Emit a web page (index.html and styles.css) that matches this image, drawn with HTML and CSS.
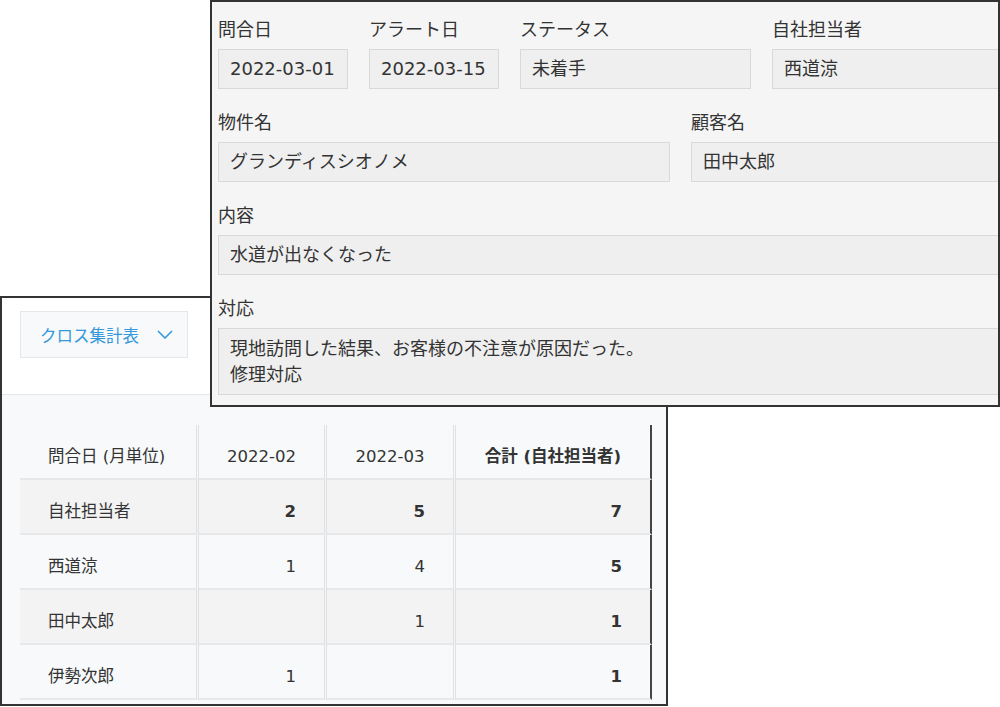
FILE: index.html
```html
<!DOCTYPE html>
<html lang="ja">

<head>
    <meta charset="UTF-8">
    <meta name="viewport" content="width=device-width, initial-scale=1.0">
    <title>クロス集計表</title>
    <link rel="stylesheet" href="styles.css">
</head>

<body>
    <div class="canvas">
        <div class="report-window">
            <div class="report-head">
                <button class="view-select">
                    <span>クロス集計表</span>
                    <svg width="16" height="9" viewBox="0 0 16 9">
                        <polyline points="1,1 8,8 15,1" fill="none" stroke="#3498db" stroke-width="1.6" />
                    </svg>
                </button>
            </div>
            <div class="report-body">
                <table class="cross-table">
                    <thead>
                        <tr>
                            <th class="col-name">問合日 (月単位)</th>
                            <th class="col-month">2022-02</th>
                            <th class="col-month2">2022-03</th>
                            <th class="col-total">合計 (自社担当者)</th>
                        </tr>
                    </thead>
                    <tbody>
                        <tr class="row-shade row-bold">
                            <td>自社担当者</td>
                            <td class="num">2</td>
                            <td class="num">5</td>
                            <td class="num total">7</td>
                        </tr>
                        <tr>
                            <td>西道涼</td>
                            <td class="num">1</td>
                            <td class="num">4</td>
                            <td class="num total">5</td>
                        </tr>
                        <tr class="row-shade">
                            <td>田中太郎</td>
                            <td class="num"></td>
                            <td class="num">1</td>
                            <td class="num total">1</td>
                        </tr>
                        <tr>
                            <td>伊勢次郎</td>
                            <td class="num">1</td>
                            <td class="num"></td>
                            <td class="num total">1</td>
                        </tr>
                    </tbody>
                </table>
            </div>
        </div>

        <div class="record-window">
            <div class="fields">
                <div class="field-row">
                    <div class="field w-date">
                        <div class="label">問合日</div>
                        <div class="value">2022-03-01</div>
                    </div>
                    <div class="field w-date">
                        <div class="label">アラート日</div>
                        <div class="value">2022-03-15</div>
                    </div>
                    <div class="field w-mid">
                        <div class="label">ステータス</div>
                        <div class="value">未着手</div>
                    </div>
                    <div class="field w-mid">
                        <div class="label">自社担当者</div>
                        <div class="value">西道涼</div>
                    </div>
                </div>
                <div class="field-row">
                    <div class="field w-wide">
                        <div class="label">物件名</div>
                        <div class="value">グランディスシオノメ</div>
                    </div>
                    <div class="field w-rest">
                        <div class="label">顧客名</div>
                        <div class="value">田中太郎</div>
                    </div>
                </div>
                <div class="field-row">
                    <div class="field w-full">
                        <div class="label">内容</div>
                        <div class="value">水道が出なくなった</div>
                    </div>
                </div>
                <div class="field-row">
                    <div class="field w-full">
                        <div class="label">対応</div>
                        <div class="value multi">現地訪問した結果、お客様の不注意が原因だった。<br>修理対応</div>
                    </div>
                </div>
            </div>
        </div>
    </div>
</body>

</html>
```

FILE: styles.css
```css
body {
    margin: 0;
    padding: 0;
    background-color: #fff;
    font-family: "DejaVu Sans", "Noto Sans CJK JP", sans-serif;
    color: #333;
}

.canvas {
    position: relative;
    width: 1000px;
    height: 707px;
    overflow: hidden;
}

/* bottom-left window: cross table */
.report-window {
    position: absolute;
    left: 0;
    top: 296px;
    width: 668px;
    height: 410px;
    box-sizing: border-box;
    border: 2px solid #333;
    background-color: #f7f9fa;
    overflow: hidden;
}

.report-head {
    background-color: #fff;
    height: 97px;
    box-sizing: border-box;
    padding: 13px 0 0 18px;
    border-bottom: 1px solid #e3e7e8;
}

.view-select {
    display: inline-flex;
    align-items: center;
    gap: 18px;
    height: 47px;
    box-sizing: border-box;
    padding: 0 14px 0 19px;
    background-color: #f7f9fa;
    border: 1px solid #e3e7e8;
    color: #3498db;
    font-family: "DejaVu Sans", "Noto Sans CJK JP", sans-serif;
    font-size: 16.5px;
    cursor: pointer;
}

.view-select svg {
    display: block;
}

.report-body {
    padding: 30px 0 0 18px;
}

.cross-table {
    border-collapse: separate;
    border-spacing: 0;
    table-layout: fixed;
    font-size: 16.5px;
    color: #333;
}

.cross-table th,
.cross-table td {
    box-sizing: border-box;
    height: 55px;
    padding: 20px 28px 9px 28px;
    line-height: 24px;
    border-bottom: 2px solid #e6e8e9;
    border-right: 3px double #dfe2e3;
    white-space: nowrap;
    vertical-align: top;
}

.cross-table th {
    font-weight: normal;
    text-align: center;
}

.cross-table th.col-name {
    width: 179px;
    text-align: left;
}

.col-month {
    width: 128px;
}

.col-month2 {
    width: 129px;
}

.cross-table th.col-total {
    width: 196px;
    font-weight: bold;
}

.cross-table .col-total,
.cross-table .total {
    border-right: 2px solid #444;
}

.num {
    text-align: right;
}

.total {
    font-weight: bold;
}

.row-shade td {
    background-color: #f3f3f3;
}

.row-bold .num {
    font-weight: bold;
}

/* top-right window: record detail */
.record-window {
    position: absolute;
    left: 210px;
    top: 0;
    width: 790px;
    height: 407px;
    box-sizing: border-box;
    border: 2px solid #333;
    background-color: #f5f5f5;
    padding: 16px 0 0 6px;
    overflow: hidden;
    z-index: 2;
}

.fields {
    width: 800px;
    display: flex;
    flex-direction: column;
    gap: 22px;
}

.field-row {
    display: flex;
    gap: 21px;
}

.label {
    font-size: 18px;
    line-height: 24px;
    margin-bottom: 7px;
    white-space: nowrap;
}

.value {
    box-sizing: border-box;
    height: 40px;
    padding: 7px 11px;
    font-size: 18px;
    line-height: 24px;
    background-color: #efefef;
    border: 1px solid #d9d9d9;
    white-space: nowrap;
}

.value.multi {
    height: 67px;
    padding: 7px 11px;
    line-height: 26px;
}

.w-date {
    width: 130px;
}

.w-mid {
    width: 231px;
}

.w-wide {
    width: 452px;
}

.w-rest {
    width: 320px;
}

.w-full {
    width: 800px;
}
```
